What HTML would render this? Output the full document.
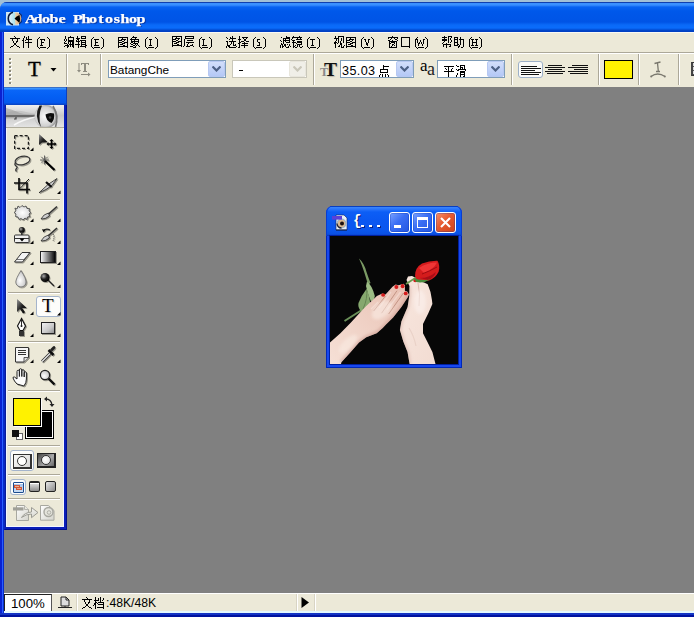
<!DOCTYPE html><html><head><meta charset="utf-8"><style>
*{margin:0;padding:0;box-sizing:border-box}
html,body{width:694px;height:617px;overflow:hidden;background:#808080;position:relative;font-family:"Liberation Sans",sans-serif}
.a{position:absolute}
</style></head><body><div class="a" style="left:0;top:0;width:694px;height:3px;background:#a2c0d6"></div>
<div class="a" style="left:0;top:0;width:10px;height:10px;background:#a2c0d6"></div>
<div class="a" style="left:0;top:2px;width:700px;height:615px;background:#0b57e8;border-radius:7px 0 0 0"></div>
<div class="a" style="left:0;top:30px;width:2px;height:587px;background:#0a22d0"></div>
<div class="a" style="left:2px;top:30px;width:1px;height:587px;background:#2a5eff"></div>
<div class="a" style="left:3px;top:32px;width:1px;height:585px;background:#0a2cc8"></div>
<div class="a" style="left:0;top:2px;width:700px;height:30px;border-radius:7px 0 0 0;background:linear-gradient(#1040b0 0px,#1040b0 1px,#3a90ff 1px,#3a90ff 3px,#0862f2 5px,#0058ea 9px,#0054e6 20px,#0a6af8 23px,#0a6cfc 26px,#0044c8 28.5px,#003cc0 30px)"></div>
<div class="a" style="left:26px;top:10px;width:120px;height:18px;color:#fff;text-shadow:1px 1px 0 #0a3aa8;-webkit-text-stroke:.25px #fff;font:bold 13.2px/18px 'Liberation Serif',serif"><span style="position:absolute;left:0.00px;width:8px;text-align:center;transform:scaleX(1.22)">A</span><span style="position:absolute;left:7.93px;width:8px;text-align:center;transform:scaleX(1.22)">d</span><span style="position:absolute;left:15.86px;width:8px;text-align:center;transform:scaleX(1.22)">o</span><span style="position:absolute;left:23.79px;width:8px;text-align:center;transform:scaleX(1.22)">b</span><span style="position:absolute;left:31.72px;width:8px;text-align:center;transform:scaleX(1.22)">e</span><span style="position:absolute;left:47.58px;width:8px;text-align:center;transform:scaleX(1.22)">P</span><span style="position:absolute;left:55.51px;width:8px;text-align:center;transform:scaleX(1.22)">h</span><span style="position:absolute;left:63.44px;width:8px;text-align:center;transform:scaleX(1.22)">o</span><span style="position:absolute;left:71.37px;width:8px;text-align:center;transform:scaleX(1.22)">t</span><span style="position:absolute;left:79.30px;width:8px;text-align:center;transform:scaleX(1.22)">o</span><span style="position:absolute;left:87.23px;width:8px;text-align:center;transform:scaleX(1.22)">s</span><span style="position:absolute;left:95.16px;width:8px;text-align:center;transform:scaleX(1.22)">h</span><span style="position:absolute;left:103.09px;width:8px;text-align:center;transform:scaleX(1.22)">o</span><span style="position:absolute;left:111.02px;width:8px;text-align:center;transform:scaleX(1.22)">p</span></div>
<svg class="a" style="left:5px;top:9px" width="17" height="17" viewBox="0 0 17 17">
<defs><linearGradient id="ic1" x1="0" y1="0" x2="1" y2="0"><stop offset="0" stop-color="#e8f4ff"/><stop offset=".5" stop-color="#a8e0e8"/><stop offset=".55" stop-color="#f0d0a8"/><stop offset="1" stop-color="#d09860"/></linearGradient></defs>
<rect x="1" y="3" width="13" height="13.5" fill="#cfe6f2"/>
<circle cx="10" cy="9.5" r="6.3" fill="url(#ic1)"/>
<path d="M8 3.3 a6.5 6.5 0 0 0 0 12.5" stroke="#0a1838" stroke-width="1.6" fill="none"/>
<path d="M14 4 a6 6 0 0 1 0 11" stroke="#1a2040" stroke-width="1" fill="none"/>
<path d="M14.5 6 q-4 1.5 -5 3.8 q2 1.2 5 4.2 q1.2-4 0-8z" fill="#000"/>
</svg>
<div class="a" style="left:4px;top:32px;width:690px;height:21px;background:#ece9d8;border-top:1px solid #f8f8f4;border-bottom:1px solid #aca899"></div>
<div class="a" style="left:4px;top:53px;width:690px;height:34px;background:#ece9d8;border-top:1px solid #fff"></div>
<svg style="position:absolute;left:10px;top:36px" width="22" height="12" viewBox="0 0 22 12" shape-rendering="crispEdges"><path fill="#000" d="M4 0h1v1h-1zM14 0h1v1h-1zM18 0h1v1h-1zM5 1h1v1h-1zM14 1h1v1h-1zM16 1h1v1h-1zM18 1h1v1h-1zM0 2h10v1h-10zM13 2h1v1h-1zM16 2h1v1h-1zM18 2h1v1h-1zM2 3h1v1h-1zM7 3h1v1h-1zM13 3h1v1h-1zM16 3h6v1h-6zM2 4h1v1h-1zM7 4h1v1h-1zM12 4h2v1h-2zM15 4h1v1h-1zM18 4h1v1h-1zM3 5h1v1h-1zM6 5h2v1h-2zM13 5h1v1h-1zM18 5h1v1h-1zM3 6h1v1h-1zM6 6h1v1h-1zM13 6h1v1h-1zM15 6h7v1h-7zM4 7h2v1h-2zM13 7h1v1h-1zM18 7h1v1h-1zM4 8h2v1h-2zM13 8h1v1h-1zM18 8h1v1h-1zM3 9h1v1h-1zM6 9h1v1h-1zM13 9h1v1h-1zM18 9h1v1h-1zM1 10h2v1h-2zM7 10h2v1h-2zM13 10h1v1h-1zM18 10h1v1h-1zM0 11h1v1h-1zM9 11h1v1h-1zM13 11h1v1h-1zM18 11h1v1h-1z"/></svg>
<svg style="position:absolute;left:37px;top:37px" width="3" height="12" viewBox="0 0 3 12" shape-rendering="crispEdges"><path fill="#000" d="M2 0h1v1h-1zM1 1h1v1h-1zM0 2h1v1h-1zM0 3h1v1h-1zM0 4h1v1h-1zM0 5h1v1h-1zM0 6h1v1h-1zM0 7h1v1h-1zM0 8h1v1h-1zM0 9h1v1h-1zM1 10h1v1h-1zM2 11h1v1h-1z"/></svg>
<svg style="position:absolute;left:47px;top:37px" width="3" height="12" viewBox="0 0 3 12" shape-rendering="crispEdges"><path fill="#000" d="M0 0h1v1h-1zM1 1h1v1h-1zM2 2h1v1h-1zM2 3h1v1h-1zM2 4h1v1h-1zM2 5h1v1h-1zM2 6h1v1h-1zM2 7h1v1h-1zM2 8h1v1h-1zM2 9h1v1h-1zM1 10h1v1h-1zM0 11h1v1h-1z"/></svg>
<svg style="position:absolute;left:40px;top:39px" width="5" height="7" viewBox="0 0 5 7" shape-rendering="crispEdges"><path fill="#000" d="M0 0h5v1h-5zM1 1h1v1h-1zM4 1h1v1h-1zM1 2h1v1h-1zM1 3h3v1h-3zM1 4h1v1h-1zM1 5h1v1h-1zM0 6h3v1h-3z"/></svg>
<div class="a" style="left:40px;top:47px;width:6px;height:1px;background:#000"></div>
<svg style="position:absolute;left:64px;top:36px" width="23" height="12" viewBox="0 0 23 12" shape-rendering="crispEdges"><path fill="#000" d="M1 0h1v1h-1zM6 0h1v1h-1zM13 0h1v1h-1zM17 0h5v1h-5zM1 1h1v1h-1zM4 1h6v1h-6zM13 1h1v1h-1zM17 1h1v1h-1zM21 1h1v1h-1zM1 2h1v1h-1zM4 2h1v1h-1zM9 2h1v1h-1zM12 2h4v1h-4zM17 2h5v1h-5zM0 3h1v1h-1zM2 3h1v1h-1zM4 3h1v1h-1zM9 3h1v1h-1zM13 3h2v1h-2zM0 4h1v1h-1zM2 4h1v1h-1zM4 4h6v1h-6zM12 4h1v1h-1zM14 4h1v1h-1zM16 4h6v1h-6zM1 5h1v1h-1zM4 5h6v1h-6zM12 5h4v1h-4zM17 5h1v1h-1zM21 5h1v1h-1zM0 6h1v1h-1zM4 6h1v1h-1zM6 6h1v1h-1zM8 6h2v1h-2zM14 6h1v1h-1zM17 6h5v1h-5zM0 7h3v1h-3zM4 7h1v1h-1zM6 7h1v1h-1zM8 7h2v1h-2zM14 7h1v1h-1zM17 7h1v1h-1zM21 7h1v1h-1zM3 8h1v1h-1zM5 8h5v1h-5zM11 8h5v1h-5zM17 8h5v1h-5zM1 9h4v1h-4zM6 9h1v1h-1zM8 9h2v1h-2zM14 9h1v1h-1zM17 9h1v1h-1zM21 9h2v1h-2zM0 10h1v1h-1zM3 10h2v1h-2zM6 10h1v1h-1zM8 10h2v1h-2zM14 10h1v1h-1zM16 10h6v1h-6zM3 11h1v1h-1zM9 11h1v1h-1zM14 11h1v1h-1zM21 11h1v1h-1z"/></svg>
<svg style="position:absolute;left:91px;top:37px" width="3" height="12" viewBox="0 0 3 12" shape-rendering="crispEdges"><path fill="#000" d="M2 0h1v1h-1zM1 1h1v1h-1zM0 2h1v1h-1zM0 3h1v1h-1zM0 4h1v1h-1zM0 5h1v1h-1zM0 6h1v1h-1zM0 7h1v1h-1zM0 8h1v1h-1zM0 9h1v1h-1zM1 10h1v1h-1zM2 11h1v1h-1z"/></svg>
<svg style="position:absolute;left:101px;top:37px" width="3" height="12" viewBox="0 0 3 12" shape-rendering="crispEdges"><path fill="#000" d="M0 0h1v1h-1zM1 1h1v1h-1zM2 2h1v1h-1zM2 3h1v1h-1zM2 4h1v1h-1zM2 5h1v1h-1zM2 6h1v1h-1zM2 7h1v1h-1zM2 8h1v1h-1zM2 9h1v1h-1zM1 10h1v1h-1zM0 11h1v1h-1z"/></svg>
<svg style="position:absolute;left:94px;top:39px" width="5" height="7" viewBox="0 0 5 7" shape-rendering="crispEdges"><path fill="#000" d="M0 0h5v1h-5zM1 1h1v1h-1zM1 2h1v1h-1zM1 3h3v1h-3zM1 4h1v1h-1zM1 5h1v1h-1zM0 6h5v1h-5z"/></svg>
<div class="a" style="left:94px;top:47px;width:6px;height:1px;background:#000"></div>
<svg style="position:absolute;left:118px;top:36px" width="22" height="12" viewBox="0 0 22 12" shape-rendering="crispEdges"><path fill="#000" d="M15 0h1v1h-1zM0 1h10v1h-10zM14 1h5v1h-5zM0 2h1v1h-1zM4 2h1v1h-1zM9 2h1v1h-1zM13 2h1v1h-1zM17 2h1v1h-1zM0 3h1v1h-1zM3 3h5v1h-5zM9 3h1v1h-1zM12 3h9v1h-9zM0 4h4v1h-4zM6 4h1v1h-1zM9 4h1v1h-1zM13 4h1v1h-1zM16 4h1v1h-1zM20 4h1v1h-1zM0 5h1v1h-1zM4 5h2v1h-2zM9 5h1v1h-1zM13 5h8v1h-8zM0 6h4v1h-4zM6 6h4v1h-4zM13 6h2v1h-2zM16 6h1v1h-1zM20 6h1v1h-1zM0 7h1v1h-1zM4 7h3v1h-3zM9 7h1v1h-1zM12 7h1v1h-1zM15 7h5v1h-5zM0 8h1v1h-1zM2 8h3v1h-3zM9 8h1v1h-1zM13 8h2v1h-2zM17 8h1v1h-1zM19 8h1v1h-1zM0 9h1v1h-1zM5 9h2v1h-2zM9 9h1v1h-1zM15 9h2v1h-2zM18 9h1v1h-1zM20 9h1v1h-1zM0 10h10v1h-10zM12 10h3v1h-3zM17 10h1v1h-1zM21 10h1v1h-1zM0 11h1v1h-1zM9 11h1v1h-1zM15 11h3v1h-3z"/></svg>
<svg style="position:absolute;left:145px;top:37px" width="3" height="12" viewBox="0 0 3 12" shape-rendering="crispEdges"><path fill="#000" d="M2 0h1v1h-1zM1 1h1v1h-1zM0 2h1v1h-1zM0 3h1v1h-1zM0 4h1v1h-1zM0 5h1v1h-1zM0 6h1v1h-1zM0 7h1v1h-1zM0 8h1v1h-1zM0 9h1v1h-1zM1 10h1v1h-1zM2 11h1v1h-1z"/></svg>
<svg style="position:absolute;left:155px;top:37px" width="3" height="12" viewBox="0 0 3 12" shape-rendering="crispEdges"><path fill="#000" d="M0 0h1v1h-1zM1 1h1v1h-1zM2 2h1v1h-1zM2 3h1v1h-1zM2 4h1v1h-1zM2 5h1v1h-1zM2 6h1v1h-1zM2 7h1v1h-1zM2 8h1v1h-1zM2 9h1v1h-1zM1 10h1v1h-1zM0 11h1v1h-1z"/></svg>
<svg style="position:absolute;left:149px;top:39px" width="3" height="7" viewBox="0 0 3 7" shape-rendering="crispEdges"><path fill="#000" d="M0 0h3v1h-3zM1 1h1v1h-1zM1 2h1v1h-1zM1 3h1v1h-1zM1 4h1v1h-1zM1 5h1v1h-1zM0 6h3v1h-3z"/></svg>
<div class="a" style="left:148px;top:47px;width:6px;height:1px;background:#000"></div>
<svg style="position:absolute;left:172px;top:36px" width="22" height="11" viewBox="0 0 22 11" shape-rendering="crispEdges"><path fill="#000" d="M0 0h10v1h-10zM13 0h9v1h-9zM0 1h1v1h-1zM4 1h1v1h-1zM9 1h1v1h-1zM13 1h1v1h-1zM21 1h1v1h-1zM0 2h1v1h-1zM3 2h5v1h-5zM9 2h1v1h-1zM13 2h9v1h-9zM0 3h4v1h-4zM6 3h1v1h-1zM9 3h1v1h-1zM12 3h1v1h-1zM0 4h1v1h-1zM4 4h2v1h-2zM9 4h1v1h-1zM12 4h1v1h-1zM15 4h6v1h-6zM0 5h4v1h-4zM6 5h4v1h-4zM12 5h1v1h-1zM0 6h1v1h-1zM4 6h3v1h-3zM9 6h1v1h-1zM12 6h1v1h-1zM14 6h8v1h-8zM0 7h1v1h-1zM2 7h3v1h-3zM9 7h1v1h-1zM12 7h1v1h-1zM16 7h1v1h-1zM0 8h1v1h-1zM5 8h2v1h-2zM9 8h1v1h-1zM12 8h1v1h-1zM15 8h1v1h-1zM20 8h1v1h-1zM0 9h10v1h-10zM12 9h1v1h-1zM15 9h1v1h-1zM18 9h3v1h-3zM0 10h1v1h-1zM9 10h1v1h-1zM11 10h1v1h-1zM14 10h4v1h-4zM21 10h1v1h-1z"/></svg>
<svg style="position:absolute;left:199px;top:37px" width="3" height="12" viewBox="0 0 3 12" shape-rendering="crispEdges"><path fill="#000" d="M2 0h1v1h-1zM1 1h1v1h-1zM0 2h1v1h-1zM0 3h1v1h-1zM0 4h1v1h-1zM0 5h1v1h-1zM0 6h1v1h-1zM0 7h1v1h-1zM0 8h1v1h-1zM0 9h1v1h-1zM1 10h1v1h-1zM2 11h1v1h-1z"/></svg>
<svg style="position:absolute;left:209px;top:37px" width="3" height="12" viewBox="0 0 3 12" shape-rendering="crispEdges"><path fill="#000" d="M0 0h1v1h-1zM1 1h1v1h-1zM2 2h1v1h-1zM2 3h1v1h-1zM2 4h1v1h-1zM2 5h1v1h-1zM2 6h1v1h-1zM2 7h1v1h-1zM2 8h1v1h-1zM2 9h1v1h-1zM1 10h1v1h-1zM0 11h1v1h-1z"/></svg>
<svg style="position:absolute;left:202px;top:39px" width="5" height="7" viewBox="0 0 5 7" shape-rendering="crispEdges"><path fill="#000" d="M0 0h3v1h-3zM1 1h1v1h-1zM1 2h1v1h-1zM1 3h1v1h-1zM1 4h1v1h-1zM1 5h1v1h-1zM0 6h5v1h-5z"/></svg>
<div class="a" style="left:202px;top:47px;width:6px;height:1px;background:#000"></div>
<svg style="position:absolute;left:226px;top:36px" width="23" height="12" viewBox="0 0 23 12" shape-rendering="crispEdges"><path fill="#000" d="M6 0h1v1h-1zM13 0h1v1h-1zM0 1h1v1h-1zM4 1h1v1h-1zM6 1h1v1h-1zM13 1h1v1h-1zM16 1h6v1h-6zM1 2h1v1h-1zM4 2h6v1h-6zM13 2h1v1h-1zM17 2h1v1h-1zM20 2h1v1h-1zM3 3h1v1h-1zM6 3h1v1h-1zM12 3h3v1h-3zM18 3h2v1h-2zM6 4h1v1h-1zM13 4h1v1h-1zM18 4h2v1h-2zM0 5h2v1h-2zM3 5h7v1h-7zM13 5h1v1h-1zM15 5h3v1h-3zM20 5h3v1h-3zM1 6h1v1h-1zM5 6h1v1h-1zM7 6h1v1h-1zM13 6h2v1h-2zM18 6h1v1h-1zM1 7h1v1h-1zM5 7h1v1h-1zM7 7h1v1h-1zM12 7h2v1h-2zM16 7h6v1h-6zM1 8h1v1h-1zM4 8h1v1h-1zM7 8h1v1h-1zM9 8h1v1h-1zM13 8h1v1h-1zM18 8h1v1h-1zM1 9h3v1h-3zM7 9h3v1h-3zM13 9h1v1h-1zM15 9h7v1h-7zM0 10h1v1h-1zM2 10h2v1h-2zM10 10h1v1h-1zM13 10h1v1h-1zM18 10h1v1h-1zM0 11h1v1h-1zM3 11h7v1h-7zM12 11h2v1h-2zM18 11h1v1h-1z"/></svg>
<svg style="position:absolute;left:253px;top:37px" width="3" height="12" viewBox="0 0 3 12" shape-rendering="crispEdges"><path fill="#000" d="M2 0h1v1h-1zM1 1h1v1h-1zM0 2h1v1h-1zM0 3h1v1h-1zM0 4h1v1h-1zM0 5h1v1h-1zM0 6h1v1h-1zM0 7h1v1h-1zM0 8h1v1h-1zM0 9h1v1h-1zM1 10h1v1h-1zM2 11h1v1h-1z"/></svg>
<svg style="position:absolute;left:263px;top:37px" width="3" height="12" viewBox="0 0 3 12" shape-rendering="crispEdges"><path fill="#000" d="M0 0h1v1h-1zM1 1h1v1h-1zM2 2h1v1h-1zM2 3h1v1h-1zM2 4h1v1h-1zM2 5h1v1h-1zM2 6h1v1h-1zM2 7h1v1h-1zM2 8h1v1h-1zM2 9h1v1h-1zM1 10h1v1h-1zM0 11h1v1h-1z"/></svg>
<svg style="position:absolute;left:257px;top:39px" width="3" height="7" viewBox="0 0 3 7" shape-rendering="crispEdges"><path fill="#000" d="M0 0h3v1h-3zM0 1h1v1h-1zM0 2h1v1h-1zM1 3h2v1h-2zM2 4h1v1h-1zM2 5h1v1h-1zM0 6h3v1h-3z"/></svg>
<div class="a" style="left:256px;top:47px;width:6px;height:1px;background:#000"></div>
<svg style="position:absolute;left:280px;top:36px" width="23" height="12" viewBox="0 0 23 12" shape-rendering="crispEdges"><path fill="#000" d="M6 0h1v1h-1zM13 0h1v1h-1zM19 0h1v1h-1zM1 1h1v1h-1zM6 1h4v1h-4zM12 1h10v1h-10zM3 2h7v1h-7zM12 2h1v1h-1zM17 2h1v1h-1zM20 2h1v1h-1zM3 3h1v1h-1zM5 3h1v1h-1zM9 3h1v1h-1zM11 3h1v1h-1zM16 3h6v1h-6zM0 4h1v1h-1zM3 4h7v1h-7zM12 4h3v1h-3zM1 5h1v1h-1zM3 5h1v1h-1zM5 5h1v1h-1zM9 5h1v1h-1zM13 5h1v1h-1zM17 5h5v1h-5zM3 6h1v1h-1zM6 6h4v1h-4zM12 6h4v1h-4zM17 6h5v1h-5zM1 7h1v1h-1zM3 7h1v1h-1zM13 7h1v1h-1zM16 7h1v1h-1zM21 7h1v1h-1zM1 8h2v1h-2zM4 8h2v1h-2zM7 8h1v1h-1zM9 8h1v1h-1zM13 8h1v1h-1zM17 8h5v1h-5zM0 9h1v1h-1zM2 9h1v1h-1zM4 9h2v1h-2zM9 9h1v1h-1zM13 9h1v1h-1zM15 9h1v1h-1zM17 9h1v1h-1zM19 9h1v1h-1zM0 10h1v1h-1zM2 10h2v1h-2zM5 10h1v1h-1zM8 10h1v1h-1zM10 10h1v1h-1zM13 10h2v1h-2zM17 10h1v1h-1zM19 10h1v1h-1zM22 10h1v1h-1zM0 11h1v1h-1zM2 11h1v1h-1zM6 11h3v1h-3zM13 11h1v1h-1zM15 11h2v1h-2zM20 11h2v1h-2z"/></svg>
<svg style="position:absolute;left:307px;top:37px" width="3" height="12" viewBox="0 0 3 12" shape-rendering="crispEdges"><path fill="#000" d="M2 0h1v1h-1zM1 1h1v1h-1zM0 2h1v1h-1zM0 3h1v1h-1zM0 4h1v1h-1zM0 5h1v1h-1zM0 6h1v1h-1zM0 7h1v1h-1zM0 8h1v1h-1zM0 9h1v1h-1zM1 10h1v1h-1zM2 11h1v1h-1z"/></svg>
<svg style="position:absolute;left:317px;top:37px" width="3" height="12" viewBox="0 0 3 12" shape-rendering="crispEdges"><path fill="#000" d="M0 0h1v1h-1zM1 1h1v1h-1zM2 2h1v1h-1zM2 3h1v1h-1zM2 4h1v1h-1zM2 5h1v1h-1zM2 6h1v1h-1zM2 7h1v1h-1zM2 8h1v1h-1zM2 9h1v1h-1zM1 10h1v1h-1zM0 11h1v1h-1z"/></svg>
<svg style="position:absolute;left:310px;top:39px" width="5" height="7" viewBox="0 0 5 7" shape-rendering="crispEdges"><path fill="#000" d="M0 0h5v1h-5zM2 1h1v1h-1zM2 2h1v1h-1zM2 3h1v1h-1zM2 4h1v1h-1zM2 5h1v1h-1zM1 6h3v1h-3z"/></svg>
<div class="a" style="left:310px;top:47px;width:6px;height:1px;background:#000"></div>
<svg style="position:absolute;left:334px;top:36px" width="22" height="12" viewBox="0 0 22 12" shape-rendering="crispEdges"><path fill="#000" d="M1 0h1v1h-1zM4 0h6v1h-6zM1 1h1v1h-1zM4 1h1v1h-1zM9 1h1v1h-1zM12 1h10v1h-10zM0 2h5v1h-5zM7 2h1v1h-1zM9 2h1v1h-1zM12 2h1v1h-1zM16 2h1v1h-1zM21 2h1v1h-1zM2 3h1v1h-1zM4 3h1v1h-1zM7 3h1v1h-1zM9 3h1v1h-1zM12 3h1v1h-1zM15 3h5v1h-5zM21 3h1v1h-1zM2 4h1v1h-1zM4 4h1v1h-1zM7 4h1v1h-1zM9 4h1v1h-1zM12 4h4v1h-4zM18 4h1v1h-1zM21 4h1v1h-1zM1 5h1v1h-1zM4 5h1v1h-1zM6 5h1v1h-1zM9 5h1v1h-1zM12 5h1v1h-1zM16 5h2v1h-2zM21 5h1v1h-1zM0 6h3v1h-3zM4 6h1v1h-1zM6 6h1v1h-1zM9 6h1v1h-1zM12 6h4v1h-4zM18 6h4v1h-4zM0 7h2v1h-2zM3 7h1v1h-1zM6 7h2v1h-2zM12 7h1v1h-1zM16 7h3v1h-3zM21 7h1v1h-1zM1 8h1v1h-1zM6 8h2v1h-2zM12 8h1v1h-1zM14 8h3v1h-3zM21 8h1v1h-1zM1 9h1v1h-1zM5 9h1v1h-1zM7 9h1v1h-1zM10 9h1v1h-1zM12 9h1v1h-1zM17 9h2v1h-2zM21 9h1v1h-1zM1 10h1v1h-1zM4 10h2v1h-2zM7 10h1v1h-1zM9 10h1v1h-1zM12 10h10v1h-10zM1 11h1v1h-1zM7 11h3v1h-3zM12 11h1v1h-1zM21 11h1v1h-1z"/></svg>
<svg style="position:absolute;left:361px;top:37px" width="3" height="12" viewBox="0 0 3 12" shape-rendering="crispEdges"><path fill="#000" d="M2 0h1v1h-1zM1 1h1v1h-1zM0 2h1v1h-1zM0 3h1v1h-1zM0 4h1v1h-1zM0 5h1v1h-1zM0 6h1v1h-1zM0 7h1v1h-1zM0 8h1v1h-1zM0 9h1v1h-1zM1 10h1v1h-1zM2 11h1v1h-1z"/></svg>
<svg style="position:absolute;left:371px;top:37px" width="3" height="12" viewBox="0 0 3 12" shape-rendering="crispEdges"><path fill="#000" d="M0 0h1v1h-1zM1 1h1v1h-1zM2 2h1v1h-1zM2 3h1v1h-1zM2 4h1v1h-1zM2 5h1v1h-1zM2 6h1v1h-1zM2 7h1v1h-1zM2 8h1v1h-1zM2 9h1v1h-1zM1 10h1v1h-1zM0 11h1v1h-1z"/></svg>
<svg style="position:absolute;left:364px;top:39px" width="6" height="7" viewBox="0 0 6 7" shape-rendering="crispEdges"><path fill="#000" d="M0 0h2v1h-2zM4 0h2v1h-2zM1 1h1v1h-1zM4 1h1v1h-1zM1 2h1v1h-1zM4 2h1v1h-1zM2 3h1v1h-1zM4 3h1v1h-1zM2 4h2v1h-2zM2 5h2v1h-2zM3 6h1v1h-1z"/></svg>
<div class="a" style="left:364px;top:47px;width:6px;height:1px;background:#000"></div>
<svg style="position:absolute;left:388px;top:36px" width="22" height="12" viewBox="0 0 22 12" shape-rendering="crispEdges"><path fill="#000" d="M4 0h1v1h-1zM0 1h10v1h-10zM13 1h9v1h-9zM0 2h1v1h-1zM3 2h1v1h-1zM6 2h1v1h-1zM9 2h1v1h-1zM13 2h1v1h-1zM21 2h1v1h-1zM2 3h1v1h-1zM7 3h2v1h-2zM13 3h1v1h-1zM21 3h1v1h-1zM0 4h2v1h-2zM4 4h1v1h-1zM9 4h1v1h-1zM13 4h1v1h-1zM21 4h1v1h-1zM1 5h8v1h-8zM13 5h1v1h-1zM21 5h1v1h-1zM1 6h1v1h-1zM3 6h4v1h-4zM8 6h1v1h-1zM13 6h1v1h-1zM21 6h1v1h-1zM1 7h2v1h-2zM6 7h1v1h-1zM8 7h1v1h-1zM13 7h1v1h-1zM21 7h1v1h-1zM1 8h1v1h-1zM4 8h2v1h-2zM8 8h1v1h-1zM13 8h1v1h-1zM21 8h1v1h-1zM1 9h1v1h-1zM4 9h1v1h-1zM6 9h1v1h-1zM8 9h1v1h-1zM13 9h1v1h-1zM21 9h1v1h-1zM1 10h1v1h-1zM3 10h1v1h-1zM8 10h1v1h-1zM13 10h9v1h-9zM1 11h8v1h-8zM21 11h1v1h-1z"/></svg>
<svg style="position:absolute;left:415px;top:37px" width="3" height="12" viewBox="0 0 3 12" shape-rendering="crispEdges"><path fill="#000" d="M2 0h1v1h-1zM1 1h1v1h-1zM0 2h1v1h-1zM0 3h1v1h-1zM0 4h1v1h-1zM0 5h1v1h-1zM0 6h1v1h-1zM0 7h1v1h-1zM0 8h1v1h-1zM0 9h1v1h-1zM1 10h1v1h-1zM2 11h1v1h-1z"/></svg>
<svg style="position:absolute;left:425px;top:37px" width="3" height="12" viewBox="0 0 3 12" shape-rendering="crispEdges"><path fill="#000" d="M0 0h1v1h-1zM1 1h1v1h-1zM2 2h1v1h-1zM2 3h1v1h-1zM2 4h1v1h-1zM2 5h1v1h-1zM2 6h1v1h-1zM2 7h1v1h-1zM2 8h1v1h-1zM2 9h1v1h-1zM1 10h1v1h-1zM0 11h1v1h-1z"/></svg>
<svg style="position:absolute;left:416px;top:39px" width="9" height="7" viewBox="0 0 9 7" shape-rendering="crispEdges"><path fill="#000" d="M0 0h2v1h-2zM7 0h2v1h-2zM1 1h1v1h-1zM4 1h1v1h-1zM7 1h1v1h-1zM1 2h1v1h-1zM4 2h1v1h-1zM7 2h1v1h-1zM1 3h1v1h-1zM3 3h1v1h-1zM5 3h1v1h-1zM7 3h1v1h-1zM2 4h2v1h-2zM5 4h1v1h-1zM7 4h1v1h-1zM2 5h1v1h-1zM6 5h1v1h-1zM2 6h1v1h-1zM6 6h1v1h-1z"/></svg>
<div class="a" style="left:418px;top:47px;width:6px;height:1px;background:#000"></div>
<svg style="position:absolute;left:442px;top:36px" width="22" height="12" viewBox="0 0 22 12" shape-rendering="crispEdges"><path fill="#000" d="M2 0h1v1h-1zM6 0h4v1h-4zM0 1h5v1h-5zM6 1h1v1h-1zM9 1h1v1h-1zM12 1h4v1h-4zM18 1h1v1h-1zM2 2h1v1h-1zM6 2h1v1h-1zM8 2h1v1h-1zM12 2h1v1h-1zM15 2h1v1h-1zM18 2h1v1h-1zM0 3h5v1h-5zM6 3h1v1h-1zM8 3h1v1h-1zM12 3h4v1h-4zM17 3h5v1h-5zM0 4h5v1h-5zM6 4h1v1h-1zM9 4h1v1h-1zM12 4h1v1h-1zM15 4h1v1h-1zM18 4h1v1h-1zM21 4h1v1h-1zM2 5h1v1h-1zM6 5h1v1h-1zM9 5h1v1h-1zM12 5h1v1h-1zM15 5h1v1h-1zM18 5h1v1h-1zM21 5h1v1h-1zM1 6h1v1h-1zM6 6h1v1h-1zM8 6h1v1h-1zM12 6h4v1h-4zM18 6h1v1h-1zM21 6h1v1h-1zM0 7h1v1h-1zM4 7h1v1h-1zM12 7h1v1h-1zM15 7h1v1h-1zM18 7h1v1h-1zM21 7h1v1h-1zM1 8h8v1h-8zM12 8h1v1h-1zM15 8h2v1h-2zM18 8h1v1h-1zM21 8h1v1h-1zM1 9h1v1h-1zM4 9h1v1h-1zM8 9h1v1h-1zM12 9h4v1h-4zM17 9h1v1h-1zM21 9h1v1h-1zM1 10h1v1h-1zM4 10h1v1h-1zM7 10h2v1h-2zM16 10h2v1h-2zM21 10h1v1h-1zM4 11h1v1h-1zM16 11h1v1h-1zM19 11h2v1h-2z"/></svg>
<svg style="position:absolute;left:469px;top:37px" width="3" height="12" viewBox="0 0 3 12" shape-rendering="crispEdges"><path fill="#000" d="M2 0h1v1h-1zM1 1h1v1h-1zM0 2h1v1h-1zM0 3h1v1h-1zM0 4h1v1h-1zM0 5h1v1h-1zM0 6h1v1h-1zM0 7h1v1h-1zM0 8h1v1h-1zM0 9h1v1h-1zM1 10h1v1h-1zM2 11h1v1h-1z"/></svg>
<svg style="position:absolute;left:479px;top:37px" width="3" height="12" viewBox="0 0 3 12" shape-rendering="crispEdges"><path fill="#000" d="M0 0h1v1h-1zM1 1h1v1h-1zM2 2h1v1h-1zM2 3h1v1h-1zM2 4h1v1h-1zM2 5h1v1h-1zM2 6h1v1h-1zM2 7h1v1h-1zM2 8h1v1h-1zM2 9h1v1h-1zM1 10h1v1h-1zM0 11h1v1h-1z"/></svg>
<svg style="position:absolute;left:471px;top:39px" width="7" height="7" viewBox="0 0 7 7" shape-rendering="crispEdges"><path fill="#000" d="M0 0h3v1h-3zM4 0h3v1h-3zM1 1h1v1h-1zM5 1h1v1h-1zM1 2h1v1h-1zM5 2h1v1h-1zM1 3h5v1h-5zM1 4h1v1h-1zM5 4h1v1h-1zM1 5h1v1h-1zM5 5h1v1h-1zM0 6h3v1h-3zM4 6h3v1h-3z"/></svg>
<div class="a" style="left:472px;top:47px;width:6px;height:1px;background:#000"></div>
<div class="a" style="left:10px;top:59px;width:2px;height:25px;background:repeating-linear-gradient(#fff 0 2px,transparent 2px 4px)"></div>
<div class="a" style="left:9px;top:58px;width:2px;height:26px;background:repeating-linear-gradient(#8c8a7c 0 2px,transparent 2px 4px)"></div>
<div class="a" style="left:28px;top:57px;font:20.8px/24px 'Liberation Serif',serif;color:#000;-webkit-text-stroke:.3px #000;text-shadow:1px 1px 1px rgba(0,0,0,.2)">T</div>
<svg class="a" style="left:50px;top:68px" width="7" height="4"><path d="M0.5 0h6l-3 3.5z" fill="#000"/></svg>
<div class="a" style="left:66px;top:54px;width:1px;height:31px;background:#aca899;box-shadow:1px 0 0 #fff"></div>
<svg class="a" style="left:77px;top:62px" width="15" height="15" viewBox="0 0 15 15"><g fill="#8e8c80"><path d="M4 1h8v2h-1v-1h-2v7h1v1h-4v-1h1v-7h-2v1h-1z"/><path d="M1.5 1h1v7h1.5l-2 2.5-2-2.5h1.5z"/><path d="M4 12h7v-1.5l2.5 2-2.5 2v-1.5h-7z"/></g></svg>
<div class="a" style="left:100px;top:54px;width:1px;height:31px;background:#aca899;box-shadow:1px 0 0 #fff"></div>
<div class="a" style="left:108px;top:60px;width:118px;height:18px;background:#fff;border:1px solid #7f9db9"></div>
<div class="a" style="left:208px;top:61px;width:17px;height:16px;background:linear-gradient(#d2defa,#b4c8f6);border:1px solid #b7c8f2;border-radius:2px"></div>
<svg class="a" style="left:212px;top:66px" width="9" height="6" viewBox="0 0 9 6"><path d="M0.5 0.5l4 4 4-4" fill="none" stroke="#4d6185" stroke-width="2.2"/></svg>
<div class="a" style="left:110px;top:63px;font:11.8px/14px 'Liberation Sans',sans-serif;color:#000">BatangChe</div>
<div class="a" style="left:232px;top:60px;width:75px;height:18px;background:#fff;border:1px solid #c9c7ba"></div>
<div class="a" style="left:289px;top:61px;width:17px;height:16px;background:#f0efe8;border:1px solid #e8e6dc;border-radius:2px"></div>
<svg class="a" style="left:293px;top:66px" width="9" height="6" viewBox="0 0 9 6"><path d="M0.5 0.5l4 4 4-4" fill="none" stroke="#c9c7ba" stroke-width="2.2"/></svg>
<div class="a" style="left:239px;top:70px;width:4px;height:1px;background:#000"></div>
<div class="a" style="left:313px;top:54px;width:1px;height:31px;background:#aca899;box-shadow:1px 0 0 #fff"></div>
<div class="a" style="left:320px;top:65px;font:bold 12.5px/14px 'Liberation Serif',serif;color:#8a8a8a">T</div>
<div class="a" style="left:324px;top:59px;font:bold 19.5px/22px 'Liberation Serif',serif;color:#111;text-shadow:1px 1px 1px rgba(0,0,0,.2)">T</div>
<div class="a" style="left:340px;top:60px;width:74px;height:18px;background:#fff;border:1px solid #7f9db9"></div>
<div class="a" style="left:396px;top:61px;width:17px;height:16px;background:linear-gradient(#d2defa,#b4c8f6);border:1px solid #b7c8f2;border-radius:2px"></div>
<svg class="a" style="left:400px;top:66px" width="9" height="6" viewBox="0 0 9 6"><path d="M0.5 0.5l4 4 4-4" fill="none" stroke="#4d6185" stroke-width="2.2"/></svg>
<div class="a" style="left:342px;top:64px;font:12.6px/14px 'Liberation Sans',sans-serif;letter-spacing:.4px;color:#000">35.03</div><svg style="position:absolute;left:379px;top:65px" width="10" height="12" viewBox="0 0 10 12" shape-rendering="crispEdges"><path fill="#000" d="M4 0h1v1h-1zM4 1h6v1h-6zM4 2h1v1h-1zM4 3h1v1h-1zM1 4h8v1h-8zM1 5h1v1h-1zM8 5h1v1h-1zM1 6h1v1h-1zM8 6h1v1h-1zM1 7h8v1h-8zM1 9h1v1h-1zM3 9h1v1h-1zM6 9h1v1h-1zM8 9h1v1h-1zM0 10h1v1h-1zM3 10h1v1h-1zM6 10h1v1h-1zM9 10h1v1h-1zM0 11h1v1h-1zM3 11h1v1h-1zM6 11h1v1h-1zM9 11h1v1h-1z"/></svg>
<div class="a" style="left:420px;top:56px;font:17px/20px 'Liberation Serif',serif;color:#000">a</div>
<div class="a" style="left:427px;top:58px;font:18px/22px 'Liberation Serif',serif;color:#222">a</div>
<div class="a" style="left:437px;top:60px;width:68px;height:18px;background:#fff;border:1px solid #7f9db9"></div>
<div class="a" style="left:487px;top:61px;width:17px;height:16px;background:linear-gradient(#d2defa,#b4c8f6);border:1px solid #b7c8f2;border-radius:2px"></div>
<svg class="a" style="left:491px;top:66px" width="9" height="6" viewBox="0 0 9 6"><path d="M0.5 0.5l4 4 4-4" fill="none" stroke="#4d6185" stroke-width="2.2"/></svg>
<svg style="position:absolute;left:444px;top:65px" width="22" height="12" viewBox="0 0 22 12" shape-rendering="crispEdges"><path fill="#000" d="M12 0h1v1h-1zM16 0h5v1h-5zM0 1h10v1h-10zM13 1h2v1h-2zM16 1h1v1h-1zM20 1h1v1h-1zM4 2h1v1h-1zM16 2h3v1h-3zM20 2h1v1h-1zM1 3h1v1h-1zM4 3h1v1h-1zM8 3h1v1h-1zM16 3h1v1h-1zM18 3h1v1h-1zM20 3h1v1h-1zM2 4h1v1h-1zM4 4h1v1h-1zM7 4h1v1h-1zM12 4h1v1h-1zM14 4h8v1h-8zM4 5h1v1h-1zM7 5h1v1h-1zM13 5h2v1h-2zM21 5h1v1h-1zM0 6h10v1h-10zM16 6h5v1h-5zM4 7h1v1h-1zM16 7h5v1h-5zM4 8h1v1h-1zM13 8h1v1h-1zM16 8h1v1h-1zM20 8h1v1h-1zM4 9h1v1h-1zM13 9h1v1h-1zM16 9h5v1h-5zM4 10h1v1h-1zM12 10h1v1h-1zM16 10h1v1h-1zM20 10h1v1h-1zM4 11h1v1h-1zM12 11h1v1h-1zM16 11h1v1h-1zM19 11h2v1h-2z"/></svg>
<div class="a" style="left:511px;top:54px;width:1px;height:31px;background:#aca899;box-shadow:1px 0 0 #fff"></div>
<div class="a" style="left:518px;top:61px;width:25px;height:17px;border:1px solid #9db0c8;border-radius:3px;background:#fbfbf9"></div>
<div class="a" style="left:521px;top:66px;width:16px;height:1px;background:#111"></div>
<div class="a" style="left:521px;top:68px;width:20px;height:1px;background:#111"></div>
<div class="a" style="left:521px;top:70px;width:14px;height:1px;background:#111"></div>
<div class="a" style="left:521px;top:72px;width:20px;height:1px;background:#111"></div>
<div class="a" style="left:521px;top:74px;width:18px;height:1px;background:#111"></div>
<div class="a" style="left:548px;top:65px;width:14px;height:1px;background:#111"></div>
<div class="a" style="left:545px;top:67px;width:20px;height:1px;background:#111"></div>
<div class="a" style="left:548px;top:69px;width:14px;height:1px;background:#111"></div>
<div class="a" style="left:545px;top:71px;width:20px;height:1px;background:#111"></div>
<div class="a" style="left:547px;top:73px;width:16px;height:1px;background:#111"></div>
<div class="a" style="left:572px;top:65px;width:16px;height:1px;background:#111"></div>
<div class="a" style="left:568px;top:67px;width:20px;height:1px;background:#111"></div>
<div class="a" style="left:574px;top:69px;width:14px;height:1px;background:#111"></div>
<div class="a" style="left:568px;top:71px;width:20px;height:1px;background:#111"></div>
<div class="a" style="left:570px;top:73px;width:18px;height:1px;background:#111"></div>
<div class="a" style="left:598px;top:54px;width:1px;height:31px;background:#aca899;box-shadow:1px 0 0 #fff"></div>
<div class="a" style="left:604px;top:60px;width:29px;height:19px;background:#fff200;border:1px solid #000"></div>
<div class="a" style="left:638px;top:54px;width:1px;height:31px;background:#aca899;box-shadow:1px 0 0 #fff"></div>
<svg class="a" style="left:650px;top:61px" width="16" height="17" viewBox="0 0 16 17"><g fill="none" stroke="#7a786e" stroke-width="1.3"><path d="M4.5 2.5l6-1.5M7.5 2l0.8 8M6 10.5h4"/><path d="M1 15.5q6.5-5 14 0"/></g><g fill="#7a786e"><circle cx="1.2" cy="15.5" r="1"/><circle cx="14.8" cy="15.5" r="1"/></g></svg>
<div class="a" style="left:678px;top:54px;width:1px;height:31px;background:#aca899;box-shadow:1px 0 0 #fff"></div>
<div class="a" style="left:691px;top:62px;width:10px;height:14px;background:repeating-linear-gradient(#dcdcdc 0 3px,#555 3px 4px);border:1px solid #333;border-left:2px solid #444"></div>
<div class="a" style="left:4px;top:87px;width:690px;height:506px;background:#808080"></div>
<div class="a" style="left:4px;top:87px;width:63px;height:443px;background:#0a1eb8;border-left:1px solid #0a28c4;border-right:1px solid #000e90;border-bottom:1px solid #000e90"></div>
<div class="a" style="left:5px;top:105px;width:1px;height:422px;background:#0a1e98"></div>
<div class="a" style="left:4px;top:87px;width:63px;height:18px;background:linear-gradient(#3a70c8 0,#3a70c8 1px,#3a94ff 1px,#3a94ff 2px,#0a66f8 3px,#0460f4 9px,#0458ee 16px,#0846c8 17px,#0846c8 18px);border-right:1px solid #0a40c0"></div>
<div class="a" style="left:6px;top:105px;width:58px;height:422px;background:#ece9d8;border-left:1px solid #f4f6ff;border-right:1px solid #f4f6ff;border-bottom:1px solid #f4f6ff"></div>
<svg class="a" style="left:6px;top:105px" width="58" height="23" viewBox="0 0 58 23">
<defs><linearGradient id="bg1" x1="0" y1="0" x2="0" y2="1"><stop offset="0" stop-color="#f0f0f0"/><stop offset=".45" stop-color="#c8c8c8"/><stop offset="1" stop-color="#e6e6e6"/></linearGradient>
<radialGradient id="eye1" cx=".45" cy=".5" r=".6"><stop offset="0" stop-color="#fafafa"/><stop offset=".7" stop-color="#d0d0d0"/><stop offset="1" stop-color="#707070"/></radialGradient></defs>
<rect width="58" height="23" fill="url(#bg1)"/>
<path d="M0 8 q10 -4 20 -1 t14 1 v6 h-34z" fill="#bdbdbd" opacity=".7"/>
<path d="M0 3 q8 2 14 5 q6 2 15 1 v4 h-29z" fill="#9a9a9a" opacity=".55"/><path d="M0 11 h30" stroke="#444" stroke-width="1.3"/>
<path d="M10 12 v2 h-2" stroke="#444" stroke-width="1.2" fill="none"/>
<path d="M8 20 q10-6 22-8" stroke="#fff" stroke-width="1.5" fill="none" opacity=".8"/>
<ellipse cx="40" cy="11.5" rx="11.5" ry="11.5" fill="url(#eye1)"/>
<path d="M33.5 0.5 q-6 10.5 1.5 21.5 q-3.5-10.5 1-21.5z" fill="#1a1a1a"/>
<path d="M47 1 q6 10 2.5 21" stroke="#777" stroke-width="1.6" fill="none"/>
<path d="M39.5 9.5 q4-2.5 8.5-1 q1 5.5-2.5 9.5 q-5.5-2-6-8.5z" fill="#0c0c0c"/>
<circle cx="44" cy="12.5" r="1.3" fill="#444"/>
<rect x="0" y="22" width="58" height="1" fill="#b0ad9c"/>
</svg>
<div class="a" style="left:8px;top:199px;width:52px;height:1px;background:#aca899;box-shadow:0 1px 0 #fff"></div>
<div class="a" style="left:8px;top:292px;width:52px;height:1px;background:#aca899;box-shadow:0 1px 0 #fff"></div>
<div class="a" style="left:8px;top:341px;width:52px;height:1px;background:#aca899;box-shadow:0 1px 0 #fff"></div>
<div class="a" style="left:8px;top:390px;width:52px;height:1px;background:#aca899;box-shadow:0 1px 0 #fff"></div>
<div class="a" style="left:8px;top:445px;width:52px;height:1px;background:#aca899;box-shadow:0 1px 0 #fff"></div>
<div class="a" style="left:8px;top:474px;width:52px;height:1px;background:#aca899;box-shadow:0 1px 0 #fff"></div>
<div class="a" style="left:8px;top:498px;width:52px;height:1px;background:#aca899;box-shadow:0 1px 0 #fff"></div>
<svg class="a" style="left:0;top:0" width="694" height="617" viewBox="0 0 694 617">
<defs>
<linearGradient id="gdark" x1="0" y1="0" x2="1" y2="1"><stop offset="0" stop-color="#9a9a9a"/><stop offset=".5" stop-color="#222"/><stop offset="1" stop-color="#000"/></linearGradient>
<linearGradient id="ggrad" x1="0" y1="0" x2="1" y2="0"><stop offset="0" stop-color="#fff"/><stop offset="1" stop-color="#000"/></linearGradient>
<linearGradient id="gsil" x1="0" y1="0" x2="1" y2="1"><stop offset="0" stop-color="#f4f4f4"/><stop offset=".6" stop-color="#c8c8c8"/><stop offset="1" stop-color="#8a8a8a"/></linearGradient>
<radialGradient id="gball" cx=".35" cy=".35" r=".7"><stop offset="0" stop-color="#aaa"/><stop offset=".5" stop-color="#222"/><stop offset="1" stop-color="#000"/></radialGradient>
<radialGradient id="gdrop" cx=".4" cy=".6" r=".7"><stop offset="0" stop-color="#fff"/><stop offset=".7" stop-color="#cfcfcf"/><stop offset="1" stop-color="#777"/></radialGradient>
<radialGradient id="gheal" cx=".5" cy=".5" r=".55"><stop offset="0" stop-color="#fff"/><stop offset=".7" stop-color="#e0e0e0"/><stop offset="1" stop-color="#999"/></radialGradient>
<filter id="sh" x="-30%" y="-30%" width="160%" height="160%"><feGaussianBlur in="SourceAlpha" stdDeviation=".7"/><feOffset dx="1" dy="1"/><feComponentTransfer><feFuncA type="linear" slope=".35"/></feComponentTransfer><feMerge><feMergeNode/><feMergeNode in="SourceGraphic"/></feMerge></filter>
</defs>
<path d="M33.5 147.5v3.5h-3.5z" fill="#000"/><path d="M33.5 169.5v3.5h-3.5z" fill="#000"/><path d="M60.5 190.5v3.5h-3.5z" fill="#000"/><path d="M33.5 218.5v3.5h-3.5z" fill="#000"/><path d="M60.5 218.5v3.5h-3.5z" fill="#000"/><path d="M33.5 240.5v3.5h-3.5z" fill="#000"/><path d="M60.5 240.5v3.5h-3.5z" fill="#000"/><path d="M33.5 261.5v3.5h-3.5z" fill="#000"/><path d="M60.5 261.5v3.5h-3.5z" fill="#000"/><path d="M33.5 284.5v3.5h-3.5z" fill="#000"/><path d="M60.5 284.5v3.5h-3.5z" fill="#000"/><path d="M33.5 311.5v3.5h-3.5z" fill="#000"/><path d="M60.5 311.5v3.5h-3.5z" fill="#000"/><path d="M33.5 333.5v3.5h-3.5z" fill="#000"/><path d="M60.5 333.5v3.5h-3.5z" fill="#000"/><path d="M33.5 359.5v3.5h-3.5z" fill="#000"/><path d="M60.5 359.5v3.5h-3.5z" fill="#000"/>
<g filter="url(#sh)">
<!-- marquee -->
<rect x="14.6" y="135.6" width="13.8" height="12.8" fill="none" stroke="#1a1a1a" stroke-width="1.2" stroke-dasharray="3 2"/>
<!-- move -->
<path d="M39 134v11l3-2.5 2 0 3.5-0.5z" fill="url(#gdark)"/>
<path d="M51.5 139l2 2h-1.2v2.2h2.2v-1.2l2 2-2 2v-1.2h-2.2v2.2h1.2l-2 2-2-2h1.2v-2.2h-2.2v1.2l-2-2 2-2v1.2h2.2v-2.2h-1.2z" fill="#000"/>
<!-- lasso -->
<ellipse cx="22.5" cy="160.5" rx="7.5" ry="4.2" transform="rotate(-12 22.5 160.5)" fill="none" stroke="#333" stroke-width="1.2"/>
<path d="M15.5 162.5q-1.5 2 0.5 3.5q2 1 0.5 2.5q-1.5 1.5 0 3" fill="none" stroke="#333" stroke-width="1.2"/>
<!-- wand -->
<path d="M44.5 155.5v9M40 160h9M41.3 156.8l6.4 6.4M47.7 156.8l-6.4 6.4" stroke="#555" stroke-width=".9"/>
<path d="M45 161l9.5 9" stroke="#000" stroke-width="2.2"/>
<!-- crop -->
<path d="M19 178v11.5h11M14 183h13v10.5" fill="none" stroke="#111" stroke-width="1.7"/>
<path d="M20 188.5l9-9.5" stroke="#111" stroke-width="1"/>
<!-- slice -->
<path d="M39 192.8 L48 184.5 L57 178.5 L52 185.5 L46 189.5z" fill="url(#gsil)" stroke="#222" stroke-width=".8"/>
<path d="M46 182l5.5 5" stroke="#111" stroke-width="2.2"/>
<!-- heal -->
<path d="M15 208l2 1 1-3 2 1.5 2-2 2 1.5 2-1 1 2.5 2.5 0-0.5 2.5 2 1.5-2 1.5 1 2.5-2.5 0.5-0.5 2.5-2-1.5-2 2-2-1.5-2 1-1-2.5-2.5-0.5 0.5-2.5-2-1.5 2-1.5-1-2.5z" fill="url(#gheal)" stroke="#444" stroke-width=".8"/>
<!-- brush -->
<path d="M57 206.5l-9 8" stroke="#333" stroke-width="1.6"/>
<path d="M48.5 213q-5 1-7.5 6q4.5 0.5 8.5-3z" fill="url(#gsil)" stroke="#222" stroke-width=".8"/>
<!-- stamp -->
<circle cx="21.8" cy="230" r="3" fill="url(#gball)"/>
<rect x="21" y="232" width="1.6" height="3" fill="#333"/>
<rect x="14.5" y="235" width="14.5" height="7.5" rx="1" fill="#f0f0f0" stroke="#333" stroke-width="1"/>
<path d="M14.5 238.5h14.5" stroke="#333" stroke-width="1"/>
<path d="M19.5 238.5h5l-2.5 3z" fill="#000"/>
<!-- history brush -->
<path d="M57 228l-9 8" stroke="#333" stroke-width="1.6"/>
<path d="M48.5 235q-5 1-7.5 6q4.5 0.5 8.5-3z" fill="url(#gsil)" stroke="#222" stroke-width=".8"/>
<path d="M43 231q3-3 7-1" fill="none" stroke="#222" stroke-width="1.2"/>
<path d="M42 229l1.5 3.5 2-2.5z" fill="#111"/>
<path d="M53 234q2 3 0 7" fill="none" stroke="#333" stroke-width="1" stroke-dasharray="1 1"/>
<!-- eraser -->
<path d="M14.5 262l7.5-9.5h8l-7.5 9.5z" fill="#f4f4f4" stroke="#333" stroke-width="1"/>
<path d="M16 259.5h8l6-7" fill="none" stroke="#555" stroke-width=".8"/>
<!-- gradient -->
<rect x="40.5" y="251.5" width="15" height="11" fill="url(#ggrad)" stroke="#222" stroke-width="1"/>
<!-- blur drop -->
<path d="M21 270.5q-5 8-5.2 11.5a5.2 5 0 0 0 10.4 0q-0.2-3.5-5.2-11.5z" fill="url(#gdrop)" stroke="#666" stroke-width=".8"/>
<!-- dodge -->
<path d="M47.5 279.5l6.5 6.5" stroke="#222" stroke-width="1.3"/>
<circle cx="45" cy="277.5" r="4.5" fill="url(#gball)"/>
<!-- path select -->
<path d="M17 299v13l3-3 3 4.5 2-1.2-2.8-4.3h4.5z" fill="url(#gdark)"/>
<!-- pen -->
<path d="M21.5 318.5l-4 7.5 2.5 4.5h3l2.5-4.5z" fill="#fff" stroke="#111" stroke-width="1.1"/>
<path d="M21.5 319v6" stroke="#111" stroke-width=".9"/>
<circle cx="21.5" cy="326" r="1" fill="#111"/>
<rect x="19" y="331" width="5" height="5" fill="#333"/>
<!-- rect -->
<rect x="41.5" y="322.5" width="13" height="11" fill="url(#gsil)" stroke="#222" stroke-width="1"/>
<!-- notes -->
<path d="M15.5 347.5h13v10l-4.5 4.5h-8.5z" fill="#f6f6f6" stroke="#333" stroke-width="1"/>
<path d="M28.5 357.5h-4.5v4.5" fill="#ddd" stroke="#333" stroke-width=".8"/>
<path d="M18 350.5h8M18 352.5h8M18 354.5h8" stroke="#333" stroke-width="1"/>
<!-- eyedropper -->
<path d="M42 361.5l8-8" stroke="#222" stroke-width="2.6"/>
<path d="M42 361.5l8-8" stroke="#eee" stroke-width="1.2"/>
<path d="M48.5 350l5 5" stroke="#111" stroke-width="2.5"/>
<path d="M52 351.5l2.5-2.5q1.5-1.5 0.5-2.5t-2.5 0.5l-2.5 2.5z" fill="#222"/>
<!-- hand -->
<path d="M17 384q-3-3-4-6q0-1.5 1.5-1l2.5 2v-7.5q0-1.3 1.2-1.3t1.2 1.3v5v-6.5q0-1.3 1.2-1.3t1.2 1.3v6.5v-5.5q0-1.3 1.2-1.3t1.2 1.3v6v-4q0-1.2 1.1-1.2t1.1 1.2v6q0 4-2.5 7z" fill="#fbfbfb" stroke="#222" stroke-width="1"/>
<!-- zoom -->
<path d="M48.5 378.5l6 6" stroke="#111" stroke-width="2.4"/>
<circle cx="45" cy="375" r="4.6" fill="url(#gdrop)" stroke="#222" stroke-width="1.2"/>
</g>
</svg>
<div class="a" style="left:36px;top:296px;width:25px;height:21px;border:1px solid #a4b4cc;border-radius:3px;background:#fdfdfb"></div>
<svg class="a" style="left:57px;top:312px" width="4" height="4"><path d="M3.5 0v3.5h-3.5z" fill="#000"/></svg>
<div class="a" style="left:42px;top:295px;font:19px/22px 'Liberation Serif',serif;color:#000;text-shadow:1px 1px 1px rgba(0,0,0,.2)">T</div>
<div class="a" style="left:25px;top:410px;width:29px;height:29px;background:#000;border:1px solid #000;box-shadow:inset 0 0 0 1px #fff"></div>
<div class="a" style="left:26px;top:411px;width:27px;height:27px;border:1px solid #fff"></div>
<div class="a" style="left:13px;top:398px;width:28px;height:28px;background:#fff200;border:1px solid #000;box-shadow:1px 1px 0 #fff"></div>
<svg class="a" style="left:43px;top:396px" width="12" height="12" viewBox="0 0 12 12"><path d="M3 3q5 0 6 6" fill="none" stroke="#222" stroke-width="1.3"/><path d="M1 3l3-2.5v5z M9 11l-2.5-3h5z" fill="#222"/></svg>
<div class="a" style="left:16px;top:433px;width:7px;height:7px;background:#fff;border:1px solid #666"></div>
<div class="a" style="left:12px;top:430px;width:7px;height:7px;background:#111"></div>
<div class="a" style="left:10px;top:450px;width:24px;height:21px;border:1px solid #a4b4cc;border-radius:3px;background:#fdfdfb"></div>
<div class="a" style="left:13px;top:454px;width:19px;height:15px;background:linear-gradient(135deg,#fafafa,#d8d8d8);border:1px solid #333;border-right-width:2px;border-bottom-width:2px"></div>
<div class="a" style="left:17px;top:456px;width:10px;height:10px;border-radius:50%;background:#fff;border:1px solid #333"></div>
<div class="a" style="left:37px;top:453px;width:19px;height:15px;background:linear-gradient(135deg,#444,#aaa 60%,#666);border:1px solid #222;border-right-width:2px;border-bottom-width:2px"></div>
<div class="a" style="left:41px;top:455px;width:10px;height:10px;border-radius:50%;background:radial-gradient(circle at 40% 40%,#fff,#ddd);border:1px solid #333"></div>
<div class="a" style="left:10px;top:479px;width:16px;height:16px;border:1px solid #a4b4cc;border-radius:3px;background:#fdfdfb"></div>
<div class="a" style="left:13px;top:482px;width:11px;height:11px;background:linear-gradient(#fff 0,#fff 1px,#a8c4ec 1px,#c8dcf4);border:1px solid #1c4c90;border-radius:1px"></div>
<div class="a" style="left:14px;top:485px;width:6px;height:3px;border:1px solid #d05838;background:#f0b090"></div>
<div class="a" style="left:16px;top:487px;width:6px;height:3px;border:1px solid #d05838;background:#f0a080"></div>
<div class="a" style="left:29px;top:481px;width:11px;height:11px;background:linear-gradient(#fff 0,#fff 1px,#d8d8d8 1px,#8a8a8a);border:1px solid #222;border-top-width:2px;border-radius:2px"></div>
<div class="a" style="left:45px;top:481px;width:11px;height:11px;background:linear-gradient(135deg,#e8e8e8,#8a8a8a);border:1px solid #222;border-radius:2px"></div>
<svg class="a" style="left:8px;top:500px" width="56" height="26" viewBox="0 0 56 26">
<defs><linearGradient id="jg" x1="0" y1="0" x2="1" y2="1"><stop offset="0" stop-color="#fff"/><stop offset="1" stop-color="#d4d4cc"/></linearGradient></defs>
<path d="M8.5 5.5h8l4 4v11h-12z" fill="url(#jg)" stroke="#a8a8a0" stroke-width="1"/>
<path d="M16.5 5.5v4h4" fill="#e8e8e0" stroke="#a8a8a0" stroke-width=".8"/>
<rect x="5" y="7.3" width="10.5" height="3.2" fill="#a0a098"/>
<path d="M13.5 17.5q3-5 10-5.5v-4.5l6.5 5-6.5 5.2v-3.7q-5 0-10 3.5z" fill="url(#jg)" stroke="#9c9c94" stroke-width="1"/>
<path d="M32.5 5.5h8l5.5 5v9.7h-13.5z" fill="url(#jg)" stroke="#a8a8a0" stroke-width="1"/>
<circle cx="40.5" cy="12" r="4.5" fill="#e4e4dc" stroke="#a8a8a0" stroke-width="1.4"/>
<circle cx="41" cy="12.5" r="1.8" fill="none" stroke="#b0b0a8" stroke-width="1"/>
</svg>
<div class="a" style="left:326px;top:206px;width:136px;height:162px;background:#1848ee;border-radius:7px 7px 0 0;box-shadow:inset 0 0 0 1px #0028b8"></div>
<div class="a" style="left:326px;top:206px;width:136px;height:30px;border-radius:7px 7px 0 0;background:linear-gradient(#0840c0 0,#0840c0 1px,#3a86ff 1px,#2a76fc 3px,#0c5ef6 6px,#0a58f2 14px,#0a56ee 24px,#0a50e4 28px,#0836b8 30px);box-shadow:inset 1px 0 0 #0a3cd0,inset -1px 0 0 #0a3cd0"></div>
<div class="a" style="left:329px;top:235px;width:130px;height:130px;background:#0020a0"></div>
<svg class="a" style="left:331px;top:214px" width="18" height="17" viewBox="0 0 18 17">
<path d="M5 1h8l3 3v12h-11z" fill="#e8f0f8" stroke="#102060" stroke-width=".6"/>
<circle cx="10.5" cy="9.5" r="5" fill="#9ab4c8"/>
<circle cx="10.5" cy="9.5" r="3.8" fill="#d8b890"/>
<path d="M6 9.5a4.5 4.5 0 0 0 4.5 4.5" stroke="#223" stroke-width="1.3" fill="none"/>
<circle cx="11" cy="9.5" r="2" fill="#1a1010"/>
<rect x="1" y="2" width="10" height="3.6" fill="#5a40d8"/>
<rect x="5" y="15.5" width="11" height="1" fill="#102040"/>
</svg>
<div class="a" style="left:353px;top:213px;color:#fff;font:bold 14px/16px 'Liberation Mono',monospace;text-shadow:1px 1px 0 #0a2080">{</div>
<div class="a" style="left:361px;top:225px;width:3px;height:2px;background:#fff;box-shadow:1px 1px 0 #0a2080"></div>
<div class="a" style="left:369px;top:225px;width:3px;height:2px;background:#fff;box-shadow:1px 1px 0 #0a2080"></div>
<div class="a" style="left:377px;top:225px;width:3px;height:2px;background:#fff;box-shadow:1px 1px 0 #0a2080"></div>
<div class="a" style="left:389px;top:212px;width:21px;height:21px;border:1px solid #fff;border-radius:3px;background:linear-gradient(135deg,#7aa2ff 0%,#3a6ef4 45%,#2456e0 100%);box-shadow:inset 0 0 0 1px rgba(0,40,160,.25)"></div>
<div class="a" style="left:412px;top:212px;width:21px;height:21px;border:1px solid #fff;border-radius:3px;background:linear-gradient(135deg,#7aa2ff 0%,#3a6ef4 45%,#2456e0 100%);box-shadow:inset 0 0 0 1px rgba(0,40,160,.25)"></div>
<div class="a" style="left:435px;top:212px;width:21px;height:21px;border:1px solid #fff;border-radius:3px;background:linear-gradient(135deg,#f4906c 0%,#e65a30 45%,#d04418 100%);box-shadow:inset 0 0 0 1px rgba(0,40,160,.25)"></div>
<div class="a" style="left:394px;top:225px;width:7px;height:3px;background:#fff"></div>
<div class="a" style="left:417px;top:217px;width:11px;height:11px;border:1px solid #fff;border-top-width:3px"></div>
<svg class="a" style="left:440px;top:217px" width="11" height="11" viewBox="0 0 11 11"><path d="M1 1l9 9M10 1l-9 9" stroke="#fff" stroke-width="2.1"/></svg>
<svg class="a" style="left:330px;top:236px" width="128" height="128" viewBox="0 0 128 128">
<defs>
<linearGradient id="skinL" x1="0" y1="1" x2="1" y2="0"><stop offset="0" stop-color="#f6e0d6"/><stop offset=".5" stop-color="#efd0c4"/><stop offset="1" stop-color="#e8c0b2"/></linearGradient>
<linearGradient id="skinR" x1="0" y1="0" x2="1" y2="1"><stop offset="0" stop-color="#f8e6de"/><stop offset="1" stop-color="#f2dcd2"/></linearGradient>
<filter id="bl"><feGaussianBlur stdDeviation=".6"/></filter><clipPath id="cpL"><path d="M0 106.5 L10.4 97.2 L20.7 86.8 L31 75.4 L36 70.2 L46.9 60.1 L52.3 57.6 L55.5 58.6 L62.5 50.8 L65.6 48.5 L68.7 49.2 L70.2 48.8 L73.4 47.7 L74.9 49.2 L74.9 54.7 L77.2 55.5 L79 58.6 L77.6 61.5 L71.4 71.1 L63.1 81.5 L56 88.5 L52.7 91.9 L46.7 97.2 L36.3 101.3 L29 106.5 L20.7 115.9 L11.4 126.2 L11 128 L0 128z"/></clipPath><clipPath id="cpR"><path d="M76.5 44 L78 40.5 L82 40 L86 42 L90 45.5 L94 46.5 L97.7 48.2 L100.5 56 L101.9 63.8 L102.4 68 L98.2 77.5 L93 87.9 L93 97.2 L97.2 105.5 L102.4 115.9 L105.5 128 L79.6 128 L77.5 115.9 L73.3 105.5 L69.9 94 L71.4 85.6 L77.6 71.1 L79.3 60 L79.5 50z"/></clipPath><filter id="bl2" x="-50%" y="-50%" width="200%" height="200%"><feGaussianBlur stdDeviation="1.5"/></filter>
</defs>
<rect width="128" height="128" fill="#070707"/>
<g filter="url(#bl)">
<!-- stem + leaf -->
<path d="M14.5 85 L31 74.5" stroke="#6a9058" stroke-width="2" fill="none"/>
<path d="M29 22.6 Q34 27 36.5 36 Q38.5 42 40.5 47 L38 48.5 Q36 42 34.5 37 Q32 29 29 22.6z" fill="#7a9a64"/>
<path d="M37 45.5 Q42.5 50 44.8 60 Q44.5 64 41 65.5 Q37.5 58 36 50z" fill="#9cbc84"/>
<path d="M36.5 53 Q40.5 61 40 70 Q35.5 74 31 75.5 Q27.5 71 28.5 67 Q31 60 36.5 53z" fill="#86a86e"/>
<path d="M36.5 53 Q38 62 33 73" stroke="#5e7e4c" stroke-width=".8" fill="none"/>
<!-- right hand -->
<path d="M76.5 44 L78 40.5 L82 40 L86 42 L90 45.5 L94 46.5 L97.7 48.2 L100.5 56 L101.9 63.8 L102.4 68 L98.2 77.5 L93 87.9 L93 97.2 L97.2 105.5 L102.4 115.9 L105.5 128 L79.6 128 L77.5 115.9 L73.3 105.5 L69.9 94 L71.4 85.6 L77.6 71.1 L79.3 60 L79.5 50z" fill="url(#skinR)"/>
<path d="M88 47 Q90.5 58 89 70" stroke="#dcbcb0" stroke-width="1" fill="none"/>
<path d="M79 92 Q84 100 86 110" stroke="#ead2c8" stroke-width="1.2" fill="none"/>
<!-- left hand + arm -->
<path d="M0 106.5 L10.4 97.2 L20.7 86.8 L31 75.4 L36 70.2 L46.9 60.1 L52.3 57.6 L55.5 58.6 L62.5 50.8 L65.6 48.5 L68.7 49.2 L70.2 48.8 L73.4 47.7 L74.9 49.2 L74.9 54.7 L77.2 55.5 L79 58.6 L77.6 61.5 L71.4 71.1 L63.1 81.5 L56 88.5 L52.7 91.9 L46.7 97.2 L36.3 101.3 L29 106.5 L20.7 115.9 L11.4 126.2 L11 128 L0 128z" fill="url(#skinL)"/>

<path d="M55.5 60 L43.8 74.9 M67 54.7 L51.6 77.2 M73.4 57 L58.6 78" stroke="#c49484" stroke-width="1" fill="none"/>
<path d="M48 66 L41 73 M61 56 L49 72 M70.5 56 L57 74" stroke="#fbeee8" stroke-width="1.3" fill="none" opacity=".4"/>
<g clip-path="url(#cpL)"><g filter="url(#bl2)">
<path d="M79 58.6 L77.6 61.5 L71.4 71.1 L63.1 81.5 L56 88.5 L52.7 91.9 L46.7 97.2 L36.3 101.3 L29 106.5 L20.7 115.9 L11.4 126.2" stroke="#c8948a" stroke-width="3.5" fill="none" opacity=".6"/>
<ellipse cx="52" cy="74" rx="12" ry="7" transform="rotate(-40 52 74)" fill="#fcf0ea" opacity=".55"/>
<ellipse cx="18" cy="108" rx="12" ry="5" transform="rotate(-45 18 108)" fill="#fcefe8" opacity=".5"/>
</g></g>
<g clip-path="url(#cpR)"><g filter="url(#bl2)">
<path d="M79.5 50 L79.3 60 L77.6 71.1 L71.4 85.6 L69.9 94 L73.3 105.5 L77.5 115.9 L79.6 128" stroke="#d4aca0" stroke-width="3" fill="none" opacity=".55"/>
<ellipse cx="90" cy="66" rx="6" ry="12" fill="#fcf2ee" opacity=".6"/>
</g></g>
<!-- nails -->
<g fill="#d41a1a">
<ellipse cx="53.1" cy="59" rx="2" ry="1.8"/>
<ellipse cx="66.4" cy="51" rx="2" ry="2"/>
<ellipse cx="72.6" cy="50.2" rx="1.9" ry="2.1"/>
<ellipse cx="75.7" cy="57.4" rx="1.9" ry="1.9"/>
<ellipse cx="85.2" cy="44" rx="2" ry="2.2"/>
</g>
<!-- stem upper -->
<path d="M76 48 L86 41.5" stroke="#6a9a50" stroke-width="1.6" fill="none"/>
<!-- rose -->
<path d="M85 40 Q85 31.5 92 27.5 Q100 24.5 107.5 24.8 Q110.5 30 108.5 36 Q105.5 42 99 44.5 Q92 46 87 44z" fill="#d41a1e"/>
<path d="M89 32 Q97 26.5 107 26.5 Q104 33 94 37z" fill="#ee3636"/><path d="M90 42 Q99 42 106 36 Q104 42 98 44z" fill="#a81014"/>
<path d="M92 38 Q100 35 107 31" stroke="#a00c10" stroke-width="1" fill="none"/>
<path d="M84 42 Q90 45 100 43.5 Q94 47.5 86 46z" fill="#4a8a3a"/>
</g>
</svg>
<div class="a" style="left:4px;top:593px;width:690px;height:18px;background:#ece9d8;border-top:1px solid #fff"></div>
<div class="a" style="left:4px;top:594px;width:48px;height:19px;background:#fff;border:1px solid #222;border-right-color:#555;border-bottom-color:#555"></div>
<div class="a" style="left:11px;top:595px;font:13.2px/17px 'Liberation Sans',sans-serif;color:#000">100%</div>
<svg class="a" style="left:57px;top:596px" width="16" height="13" viewBox="0 0 16 13"><path d="M4 1h5l3 3v6h-8z" fill="#ddd" stroke="#222" stroke-width="1"/><path d="M9 1v3h3" fill="none" stroke="#222" stroke-width="1"/><path d="M1 11.5h14" stroke="#222" stroke-width="1"/><path d="M8 10v1.5" stroke="#222"/></svg>
<div class="a" style="left:77px;top:594px;width:1px;height:18px;background:#fff;box-shadow:-1px 0 0 #d8d4c4"></div>
<div class="a" style="left:297px;top:594px;width:1px;height:18px;background:#fff;box-shadow:-1px 0 0 #d8d4c4"></div>
<div class="a" style="left:315px;top:594px;width:1px;height:18px;background:#fff;box-shadow:-1px 0 0 #d8d4c4"></div>
<svg style="position:absolute;left:82px;top:597px" width="22" height="12" viewBox="0 0 22 12" shape-rendering="crispEdges"><path fill="#000" d="M4 0h1v1h-1zM13 0h1v1h-1zM18 0h1v1h-1zM5 1h1v1h-1zM13 1h1v1h-1zM16 1h1v1h-1zM18 1h1v1h-1zM21 1h1v1h-1zM0 2h10v1h-10zM13 2h1v1h-1zM16 2h1v1h-1zM18 2h1v1h-1zM21 2h1v1h-1zM2 3h1v1h-1zM7 3h1v1h-1zM12 3h5v1h-5zM18 3h1v1h-1zM20 3h1v1h-1zM2 4h1v1h-1zM7 4h1v1h-1zM13 4h1v1h-1zM18 4h1v1h-1zM3 5h1v1h-1zM6 5h2v1h-2zM13 5h2v1h-2zM16 5h6v1h-6zM3 6h1v1h-1zM6 6h1v1h-1zM12 6h2v1h-2zM15 6h1v1h-1zM21 6h1v1h-1zM4 7h2v1h-2zM12 7h2v1h-2zM16 7h6v1h-6zM4 8h2v1h-2zM11 8h1v1h-1zM13 8h1v1h-1zM21 8h1v1h-1zM3 9h1v1h-1zM6 9h1v1h-1zM13 9h1v1h-1zM21 9h1v1h-1zM1 10h2v1h-2zM7 10h2v1h-2zM13 10h1v1h-1zM15 10h7v1h-7zM0 11h1v1h-1zM9 11h1v1h-1zM13 11h1v1h-1zM21 11h1v1h-1z"/></svg>
<div class="a" style="left:106px;top:595px;font:12.2px/17px 'Liberation Sans',sans-serif;color:#000">:48K/48K</div>
<svg class="a" style="left:301px;top:597px" width="9" height="12"><path d="M0.5 0l7.5 5.5-7.5 5.5z" fill="#000"/></svg>
<div class="a" style="left:4px;top:611px;width:690px;height:2px;background:#e4f8ff"></div>
<div class="a" style="left:0;top:613px;width:694px;height:4px;background:linear-gradient(#1434c4 0,#1434c4 2px,#0012a0 2px)"></div></body></html>
